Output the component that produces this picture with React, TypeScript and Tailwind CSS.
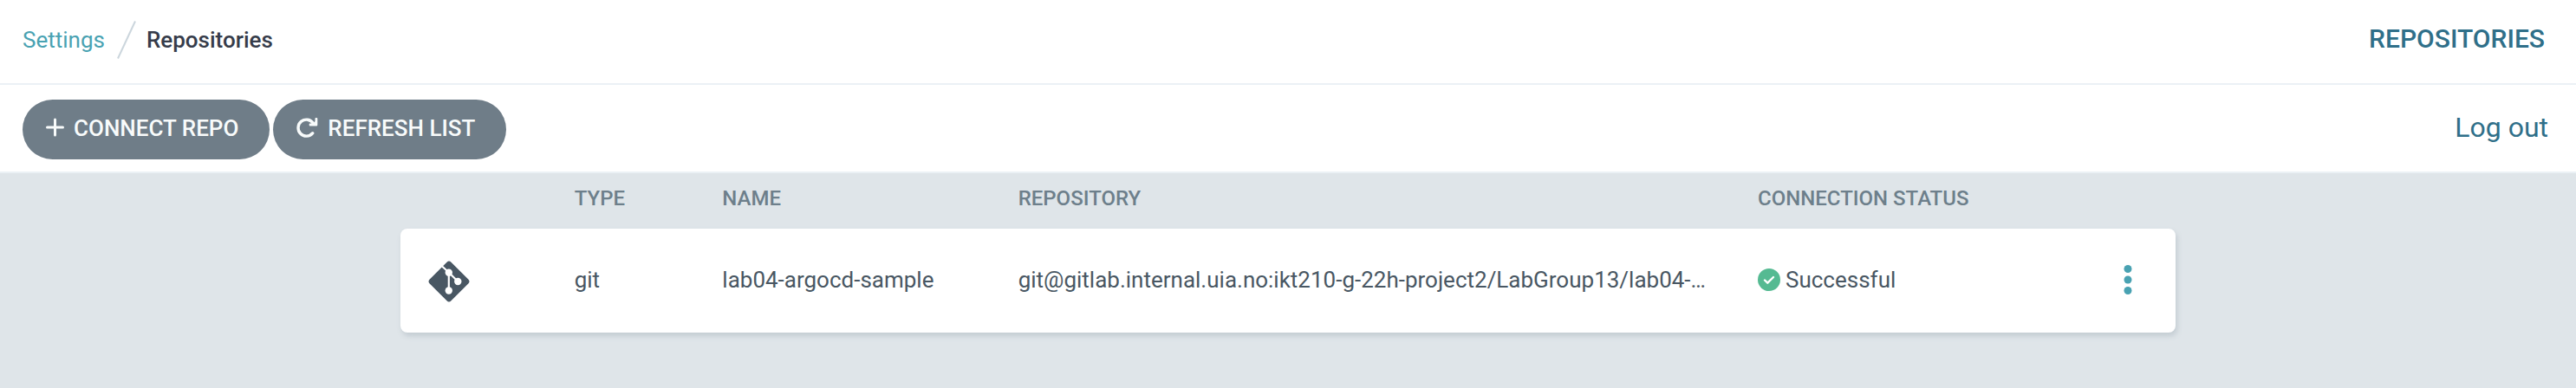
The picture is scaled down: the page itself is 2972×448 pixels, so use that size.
import React from "react";

const columns = [
  { label: "Type", width: "w-1/12" },
  { label: "Name", width: "w-2/12" },
  { label: "Repository", width: "w-5/12" },
  { label: "Connection status", width: "w-2/12" },
];

const repositories = [
  {
    type: "git",
    name: "lab04-argocd-sample",
    url: "git@gitlab.internal.uia.no:ikt210-g-22h-project2/LabGroup13/lab04-…",
    status: "Successful",
  },
];

function PlusIcon() {
  return (
    <svg viewBox="0 0 22 26" className="h-[26px] w-[22px]" fill="none" stroke="currentColor" strokeWidth="3" strokeLinecap="round" aria-hidden="true">
      <path d="M11.500 3v18M2.500 12h18" />
    </svg>
  );
}

function RefreshIcon() {
  return (
    <svg viewBox="0 0 26 26" className="h-[26px] w-[26px]" aria-hidden="true">
      <path d="M20.500 7.500A9.500 9.500 0 1 0 19.800 18.700" fill="none" stroke="currentColor" strokeWidth="3.400" strokeLinecap="round" />
      <path d="M23.500 1h.8q1 0 1 1v7.200q0 1.200-1.200 1.200h-7.400q-1 0-1-1V8.400q0-.8 1-.8h3.800L22.500 5V2q0-1 1-1z" fill="currentColor" />
    </svg>
  );
}

function GitIcon() {
  return (
    <svg viewBox="0 0 48 48" className="h-12 w-12 text-[#495763]" aria-hidden="true">
      <rect x="6.500" y="6.500" width="35" height="35" rx="3.500" fill="currentColor" transform="rotate(45 24 24)" />
      <path d="M15 5.500l9 8.300L34.300 24M23.800 13.500v21" fill="none" stroke="#fff" strokeWidth="2.200" />
      <circle cx="23.800" cy="13.700" r="4.200" fill="#fff" />
      <circle cx="34.300" cy="24" r="4.200" fill="#fff" />
      <circle cx="23.800" cy="34.500" r="4.200" fill="#fff" />
    </svg>
  );
}

function CheckIcon() {
  return (
    <svg viewBox="0 0 26 26" className="h-[26px] w-[26px] shrink-0" aria-hidden="true">
      <circle cx="13" cy="13" r="13" fill="#55ba92" />
      <path d="M8 13.500l3.300 3.200L18 10" fill="none" stroke="#fff" strokeWidth="2.400" strokeLinecap="round" strokeLinejoin="round" />
    </svg>
  );
}

function DotsIcon() {
  return (
    <svg viewBox="0 0 10 34" className="h-[34px] w-[10px]" fill="currentColor" aria-hidden="true">
      <circle cx="5" cy="4.500" r="4.500" />
      <circle cx="5" cy="17" r="4.500" />
      <circle cx="5" cy="29.500" r="4.500" />
    </svg>
  );
}

export default function App() {
  return (
    <div className="min-h-screen bg-[#dfe5e9] font-['Roboto',sans-serif] text-[26px] text-[#495763]">
      <header className="flex h-[98px] items-center justify-between border-b-2 border-[#ebf1f5] bg-white pr-9 pb-1 pl-[26px]">
        <nav aria-label="Breadcrumb" className="flex items-center">
          <a href="#settings" className="text-[#49a2b2]">Settings</a>
          <svg viewBox="0 0 22 44" className="mr-3 ml-[14px] h-11 w-[22px]" aria-hidden="true">
            <path d="M1 43.500L21 .5" stroke="#ccd6dd" strokeWidth="2" />
          </svg>
          <span className="font-medium text-[#363c4a]">Repositories</span>
        </nav>
        <h1 className="pb-1 text-[30px] font-medium text-[#2f6f89] uppercase">Repositories</h1>
      </header>

      <div className="flex h-[102px] items-center justify-between border-b-2 border-[#ebf1f5] bg-white pr-8 pl-[26px]">
        <div className="flex gap-1 pt-[2px]">
          <button type="button" className="flex h-[69px] items-center gap-[11px] rounded-full bg-[#6f7d88] pr-9 pb-[2px] pl-[26px] font-medium text-[#f8fbfb] uppercase">
            <PlusIcon />
            Connect repo
          </button>
          <button type="button" className="flex h-[69px] items-center gap-[11px] rounded-full bg-[#6f7d88] pr-9 pb-[2px] pl-[26px] font-medium text-[#f8fbfb] uppercase">
            <RefreshIcon />
            Refresh list
          </button>
        </div>
        <a href="#logout" className="pb-[2px] text-[32px] text-[#2f6f89]">Log out</a>
      </div>

      <main className="mx-auto max-w-[2048px] pb-16">
        <table className="w-full table-fixed border-separate border-spacing-0 rounded-lg text-left">
          <thead>
            <tr className="h-16 text-2xl text-[#6d7f8b] uppercase">
              <td className="w-1/12" />
              {columns.map((c) => (
                <th key={c.label} scope="col" className={`${c.width} pb-[6px] pl-[30px] font-medium whitespace-nowrap`}>
                  {c.label}
                </th>
              ))}
              <td className="w-1/12" />
            </tr>
          </thead>
          <tbody>
            {repositories.map((r) => (
              <tr key={r.name} className="h-[120px] rounded-lg bg-white shadow-[2px_4px_6px_#c3ccd2]">
                <td className="rounded-l-lg pt-[2px] pl-8"><GitIcon /></td>
                <td className="pb-[2px] pl-[30px]">{r.type}</td>
                <td className="pb-[2px] pl-[30px] whitespace-nowrap">{r.name}</td>
                <td className="truncate pr-5 pb-[2px] pl-[30px]">{r.url}</td>
                <td className="pb-[2px] pl-[30px]">
                  <span className="flex items-center gap-[6px]"><CheckIcon />{r.status}</span>
                </td>
                <td className="rounded-r-lg pr-[50px] pb-[2px]">
                  <button type="button" aria-label="Repository actions" className="ml-auto block text-[#49a2b2]"><DotsIcon /></button>
                </td>
              </tr>
            ))}
          </tbody>
        </table>
      </main>
    </div>
  );
}
